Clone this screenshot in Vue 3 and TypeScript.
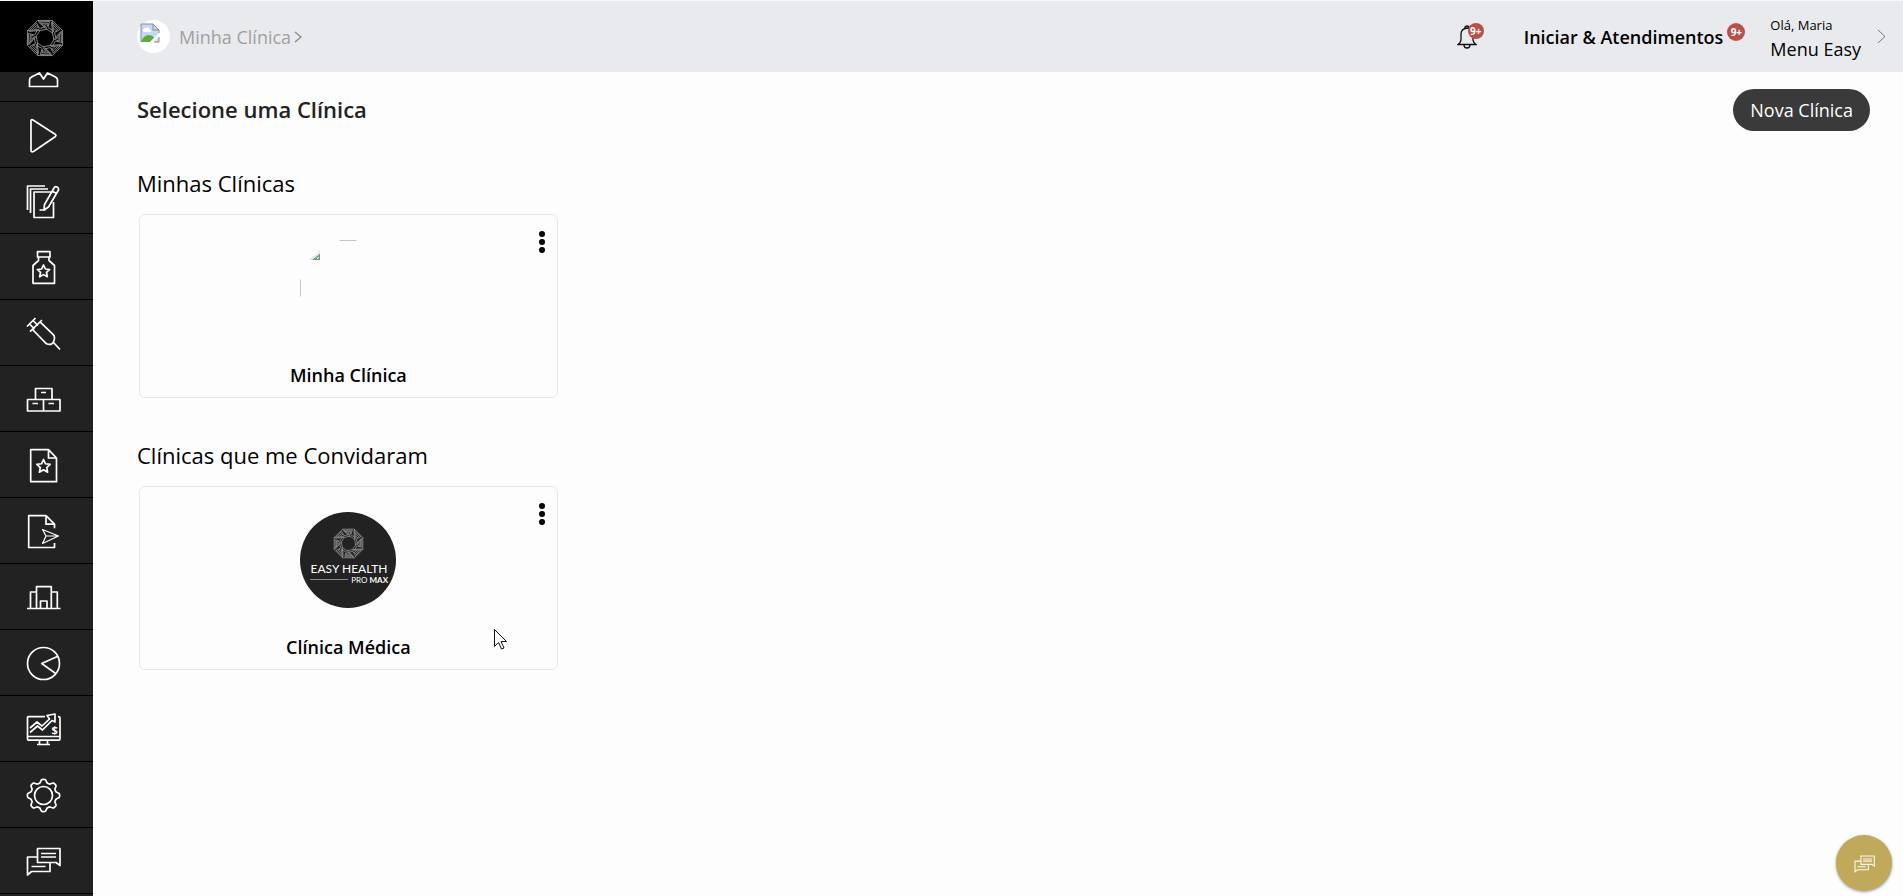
<script setup lang="ts">
import { onMounted, ref } from 'vue'

interface MenuItem {
  id: string
  label: string
}

interface Clinic {
  name: string
  hasLogo: boolean
}

interface Group {
  title: string
  clinics: Clinic[]
}

const items: MenuItem[] = [
  { id: 'user', label: 'Perfil' },
  { id: 'play', label: 'Iniciar' },
  { id: 'notes', label: 'Prontuários' },
  { id: 'bottle', label: 'Medicamentos' },
  { id: 'syringe', label: 'Vacinas' },
  { id: 'boxes', label: 'Estoque' },
  { id: 'filestar', label: 'Modelos' },
  { id: 'filesend', label: 'Envios' },
  { id: 'building', label: 'Clínicas' },
  { id: 'pie', label: 'Relatórios' },
  { id: 'monitor', label: 'Financeiro' },
  { id: 'gear', label: 'Configurações' },
  { id: 'chat', label: 'Mensagens' },
  { id: 'more', label: 'Mais' },
]

const groups: Group[] = [
  { title: 'Minhas Clínicas', clinics: [{ name: 'Minha Clínica', hasLogo: false }] },
  { title: 'Clínicas que me Convidaram', clinics: [{ name: 'Clínica Médica', hasLogo: true }] },
]

const menu = ref<HTMLElement | null>(null)
onMounted(() => {
  if (menu.value) menu.value.scrollTop = 36
})

function polar(radius: number, degrees: number, cx = 20, cy = 20): string {
  const a = (degrees * Math.PI) / 180
  return `${(cx + radius * Math.cos(a)).toFixed(2)} ${(cy + radius * Math.sin(a)).toFixed(2)}`
}

function ring(radius: number, offset: number): string {
  return 'M' + Array.from({ length: 8 }, (_, i) => polar(radius, offset + i * 45)).join('L') + 'Z'
}

// Interlaced octagonal emblem: outer and inner rings joined by eight folded bands
const emblem: string = [
  ring(20, 22.5),
  ring(9.5, 12),
  ...Array.from({ length: 8 }, (_, i) => {
    const a = 22.5 + i * 45
    return (
      `M${polar(20, a)}L${polar(11, a + 33)}` +
      `M${polar(18, a + 4)}L${polar(18, a + 38)}L${polar(12, a + 38)}` +
      `M${polar(16, a + 10)}L${polar(15.8, a + 34)}L${polar(12.5, a + 34)}` +
      `M${polar(13.8, a + 18)}L${polar(14, a + 30)}` +
      `M${polar(18, a)}L${polar(9.5, a + 34.5)}` +
      `M${polar(11.5, a - 8)}L${polar(11.5, a + 22)}`
    )
  }),
].join('')

const gear: string =
  'M' +
  Array.from({ length: 96 }, (_, i) => {
    const deg = i * 3.75
    const wave = Math.cos((deg * 8 * Math.PI) / 180)
    return polar(14.5 + 1.7 * Math.tanh(wave * 2), deg, 17.5, 16.5)
  }).join('L') +
  'Z'

function star(cx: number, cy: number, r: number): string {
  return (
    'M' +
    Array.from({ length: 10 }, (_, i) => polar(i % 2 ? r * 0.48 : r, -90 + i * 36, cx, cy)).join('L') +
    'Z'
  )
}

const chatPath =
  'M11.5 3.5h22.5v17l-4-3H11.5zM11.5 12H1.5v18l4-3.500H24v-9M15 8.500h15M15 12h15M5.500 21.500h14'

const paths: Record<string, string> = {
  user: 'M3.500 33.500v-6.500q0-2 2-3l8-4 4 6 4-6 8 4q2 1 2 3v6.500z',
  play: 'M5 2q0-2 2-1l22.500 14.500q1 1 0 2L7.500 32.500q-2.500 1-2.500-1z',
  notes:
    'M1.500 25V1H19M4.500 28V4H22M25 7H8v25.500h19.500V17M31 2q2 1 1.500 3L22.500 22l-4.500 3 .5-5.500L28 3q1-2 3-1zM26 6l4.500 2.500M13.500 25h6',
  bottle:
    'M11.500.7h12.500v5.300H11.500zM12.500 6v3.500l-5.500 5v17.800h21.500V14.500l-5.500-5V6' + star(17.5, 20.5, 6.5),
  syringe:
    'M1 9.500L9.500 1M4 14.700L16 3M3.500 7l5 5M7 3.500l5 5M6.500 12.500l14 14.300q5 2 7-2t0-7l-13.500-13M27.500 25.500l6.500 7',
  boxes: 'M9.500 5.500h16.500v11H9.500zM1.500 16.500h32.500v11.500H1.500zM17.500 16.500v11.500M15 9.500h5M6.500 20.500h5.500M22.500 20.500h5.500',
  filestar: 'M22.500.7H4.700v32h25.800V9zM22.500.7V9h8' + star(17.5, 17.5, 7),
  filesend: 'M28.500 28v4.500H2.700V.7H20l8.500 8.500v4M20 .7v8.500h8.500',
  building: 'M1 27.500h33.500M4.500 27V11h6M10.500 27V5.700h14.800V27M25.300 11h6v16M14.500 27v-7h6.500v7',
  pie: 'M17.500.5a16 16 0 1 1 0 32a16 16 0 1 1 0-32M32.500 9L15.700 16.500l14 10',
  monitor:
    'M19 3.700H2.500q-1 0-1 1v21q0 1.500 1 1.500h30.500q1 0 1-1.500V5q0-1.300-2-1.300M1.500 23.500h32.500M13.500 27.500v3.500M21.500 27.500v3.500M11 31.500h13M4 15l7-6 5 4 7.500-7-2.500-3.500 8-1.500v8l-3-1.500-9.500 9.500-5-4L4 19.500',
  gear,
  chat: chatPath,
  more: 'M1 1h32v32H1z',
}
</script>

<template>
  <div class="app">
    <aside class="sidebar">
      <a class="brand" href="#" aria-label="Easy Health">
        <svg width="38" height="38" viewBox="0 0 40 40"><path :d="emblem" /></svg>
      </a>
      <nav ref="menu" class="menu">
        <a v-for="item in items" :key="item.id" class="menu-item" href="#" :aria-label="item.label">
          <svg width="34" height="34" viewBox="0 0 34 34">
            <path :d="paths[item.id]" />
            <path v-if="item.id === 'filesend'" class="thin" d="M16.500 14.500L32.500 21 16.500 28.500 20 21zM20 21h12" />
            <circle v-if="item.id === 'gear'" cx="17.5" cy="16.500" r="9" />
            <text v-if="item.id === 'monitor'" x="25.500" y="21">$</text>
          </svg>
        </a>
      </nav>
    </aside>

    <div class="page">
      <header class="topbar">
        <a class="crumb" href="#">
          <span class="avatar">
            <svg width="20" height="20" viewBox="0 0 20 20">
              <path d="M1 1h12l6 6v12H1z" fill="#c5d9f5" />
              <path d="M3 8q0-3 3-3 3-2 4 2 2 0 1 2H4z" fill="#fff" />
              <path d="M1 19q2-6 7-7 5 0 6 3l-4 4z" fill="#5aac3c" />
              <path d="M10 19l9-9v4l-5 5z" fill="#fff" />
              <path d="M1 19V1h12l6 6v3M19 14v5h-5M13 1v6h6" fill="none" stroke="#8c8c8c" />
            </svg>
          </span>
          <span>Minha Clínica</span>
          <svg class="crumb-arrow" width="8" height="12" viewBox="0 0 8 12"><path d="M1 1l6 5-6 5" /></svg>
        </a>
        <button class="bell" type="button" aria-label="Notificações">
          <svg width="20" height="24" viewBox="0 0 20 24">
            <path d="M1 19.500h18q-3-2-3-5V9q0-5-6-6-6 1-6 6v5.500q0 3-3 5zM8 3q0-2 2-2t2 2M7 20q0 3 3 3t3-3" />
          </svg>
          <span class="badge bell-badge">9+</span>
        </button>
        <a class="start" href="#">
          <span>Iniciar &amp; Atendimentos</span>
          <span class="badge">9+</span>
        </a>
        <button class="account" type="button">
          <span class="account-text">
            <span class="hello">Olá, Maria</span>
            <span class="menu-name">Menu Easy</span>
          </span>
          <svg width="9" height="15" viewBox="0 0 9 15"><path d="M1 1l7 6.500-7 6.500" /></svg>
        </button>
      </header>

      <main class="content">
        <div class="title-row">
          <h1>Selecione uma Clínica</h1>
          <button class="new" type="button">Nova Clínica</button>
        </div>
        <section v-for="group in groups" :key="group.title" class="group">
          <h2>{{ group.title }}</h2>
          <div class="cards">
            <article v-for="clinic in group.clinics" :key="clinic.name" class="card">
              <button class="dots" type="button" aria-label="Opções">
                <svg width="6" height="22" viewBox="0 0 6 22">
                  <circle cx="3" cy="3" r="3" /><circle cx="3" cy="11" r="3" /><circle cx="3" cy="19" r="3" />
                </svg>
              </button>
              <svg v-if="clinic.hasLogo" class="picture" width="96" height="96" viewBox="0 0 96 96">
                <circle cx="48" cy="48" r="48" fill="#222" />
                <svg x="33" y="16" width="31" height="31" viewBox="0 0 40 40"><path class="mark" :d="emblem" /></svg>
                <text class="logo-name" x="49" y="61" text-anchor="middle">EASY HEALTH</text>
                <path d="M10 67.500h38" stroke="#888" />
                <text class="logo-sub" x="88" y="71" text-anchor="end">PRO <tspan class="bold">MAX</tspan></text>
              </svg>
              <svg v-else class="picture" width="96" height="96" viewBox="0 0 96 96">
                <path d="M39.500.5h17M.5 39.500v17" stroke="#c4c4c4" />
                <path d="M9 20l11-10v10z" fill="#d5e2f3" />
                <path d="M12 20l8-6v6z" fill="#77ad69" />
                <path d="M12 17l8-5M16 20l4-4" stroke="#fff" />
                <path d="M19.500 14v5.500h-5" fill="none" stroke="#888" />
              </svg>
              <h3>{{ clinic.name }}</h3>
            </article>
          </div>
        </section>
      </main>
    </div>

    <button class="chat" type="button" aria-label="Abrir conversa">
      <svg width="21" height="19" viewBox="0 0 35 32"><path :d="chatPath" /></svg>
    </button>
    <svg class="pointer" width="13" height="21" viewBox="0 0 13 21">
      <path d="M.5.5v17l4-4 3 6.500 2.500-1-3-6.500h5.500z" />
    </svg>
  </div>
</template>

<style>
body {
  margin: 0;
  background: #fdfdfd;
}
</style>

<style scoped>
.app {
  display: flex;
  height: 100vh;
  box-sizing: border-box;
  border-top: 1px solid #f8f8f9;
  font-family: 'Open Sans', 'Noto Sans', sans-serif;
  color: #000;
  overflow: hidden;
}
a {
  color: inherit;
  text-decoration: none;
}
button {
  font: inherit;
  color: inherit;
  border: 0;
  padding: 0;
  background: none;
  cursor: pointer;
}
h1,
h2,
h3 {
  margin: 0;
}
svg {
  display: block;
  flex: none;
}
.sidebar {
  width: 93px;
  flex: none;
  display: flex;
  flex-direction: column;
  background: #222;
}
.brand {
  height: 71px;
  flex: none;
  box-sizing: border-box;
  padding: 2px 3px 0 0;
  display: flex;
  align-items: center;
  justify-content: center;
  background: #000;
}
.brand svg {
  overflow: visible;
}
.brand path,
.mark {
  fill: none;
  stroke: #b0b0b0;
  stroke-width: 0.8;
}
.menu {
  flex: 1;
  min-height: 0;
  overflow-y: auto;
  scrollbar-width: none;
}
.menu-item {
  height: 66px;
  box-sizing: border-box;
  border-bottom: 1px solid #000;
  padding: 3px 7px 0 0;
  display: flex;
  align-items: center;
  justify-content: center;
}
.menu-item svg {
  overflow: visible;
  fill: none;
  stroke: #fff;
  stroke-width: 1.7;
  stroke-linejoin: round;
}
.menu-item .thin {
  stroke-width: 1.2;
}
.menu-item text {
  fill: #fff;
  stroke: none;
  font-size: 11px;
  font-weight: 700;
}
.page {
  flex: 1;
  min-width: 0;
}
.topbar {
  height: 71px;
  box-sizing: border-box;
  display: flex;
  align-items: center;
  padding: 0 17px 0 44px;
  background: #e9eaee;
  font-size: 18px;
}
.crumb {
  display: flex;
  align-items: center;
  margin-right: auto;
  color: #a0a0a0;
}
.avatar {
  width: 33px;
  height: 33px;
  box-sizing: border-box;
  padding: 3px 0 0 3px;
  margin-right: 9px;
  border-radius: 50%;
  background: #fff;
}
.crumb-arrow {
  margin-left: 3px;
  fill: none;
  stroke: #888;
  stroke-width: 1.4;
}
.bell {
  position: relative;
  margin-right: 47px;
}
.bell svg {
  fill: none;
  stroke: #111;
  stroke-width: 1.3;
}
.badge {
  width: 18px;
  height: 18px;
  border-radius: 50%;
  background: #b9504c;
  color: #fff;
  font-size: 10px;
  font-weight: 700;
  line-height: 18px;
  text-align: center;
}
.bell-badge {
  position: absolute;
  left: 11px;
  top: -2px;
  width: 16px;
  height: 16px;
  line-height: 16px;
}
.start {
  display: flex;
  gap: 4px;
  font-weight: 600;
  line-height: 28px;
  margin-right: 25px;
}
.account {
  display: flex;
  align-items: center;
  text-align: left;
  gap: 16px;
}
.account-text {
  display: flex;
  flex-direction: column;
  padding-top: 3px;
}
.hello {
  font-size: 13px;
  line-height: 22px;
}
.menu-name {
  font-weight: 500;
  line-height: 26px;
}
.account svg {
  fill: none;
  stroke: #777;
}
.content {
  padding: 17px 33px 0 44px;
}
.title-row {
  display: flex;
  align-items: center;
  justify-content: space-between;
}
h1 {
  padding-bottom: 2px;
  font-size: 22px;
  line-height: 30px;
  font-weight: 600;
  color: #222;
}
.new {
  height: 42px;
  padding: 0 17px;
  border-radius: 21px;
  background: #3a3a3a;
  color: #fff;
  font-size: 18px;
}
.group {
  padding-top: 37px;
}
h2 {
  font-size: 22px;
  line-height: 30px;
  font-weight: 400;
}
.cards {
  display: grid;
  grid-template-columns: repeat(4, 1fr);
  gap: 18px;
  padding: 16px 2px 5px;
}
.card {
  position: relative;
  display: flex;
  flex-direction: column;
  align-items: center;
  border: 1px solid #e8e8e8;
  border-radius: 6px;
  padding: 25px 0 8px;
}
.dots {
  position: absolute;
  right: 12px;
  top: 16px;
}
h3 {
  margin-top: 25px;
  font-size: 18px;
  line-height: 28px;
  font-weight: 600;
}
.logo-name,
.logo-sub {
  font-family: Lato, sans-serif;
  fill: #fff;
}
.logo-name {
  font-size: 12px;
}
.logo-sub {
  font-size: 8px;
}
.bold {
  font-weight: 700;
}
.chat {
  position: fixed;
  right: 11px;
  bottom: 5px;
  width: 56px;
  height: 56px;
  border-radius: 50%;
  background: #c1a95c;
  box-shadow: 0 1px 3px rgba(0, 0, 0, 0.4);
  display: flex;
  align-items: center;
  justify-content: center;
}
.chat path {
  fill: none;
  stroke: #fffbe8;
  stroke-width: 1.8;
}
.pointer {
  position: fixed;
  left: 494px;
  top: 629px;
  pointer-events: none;
}
.pointer path {
  fill: #fff;
  stroke: #111;
}
</style>
